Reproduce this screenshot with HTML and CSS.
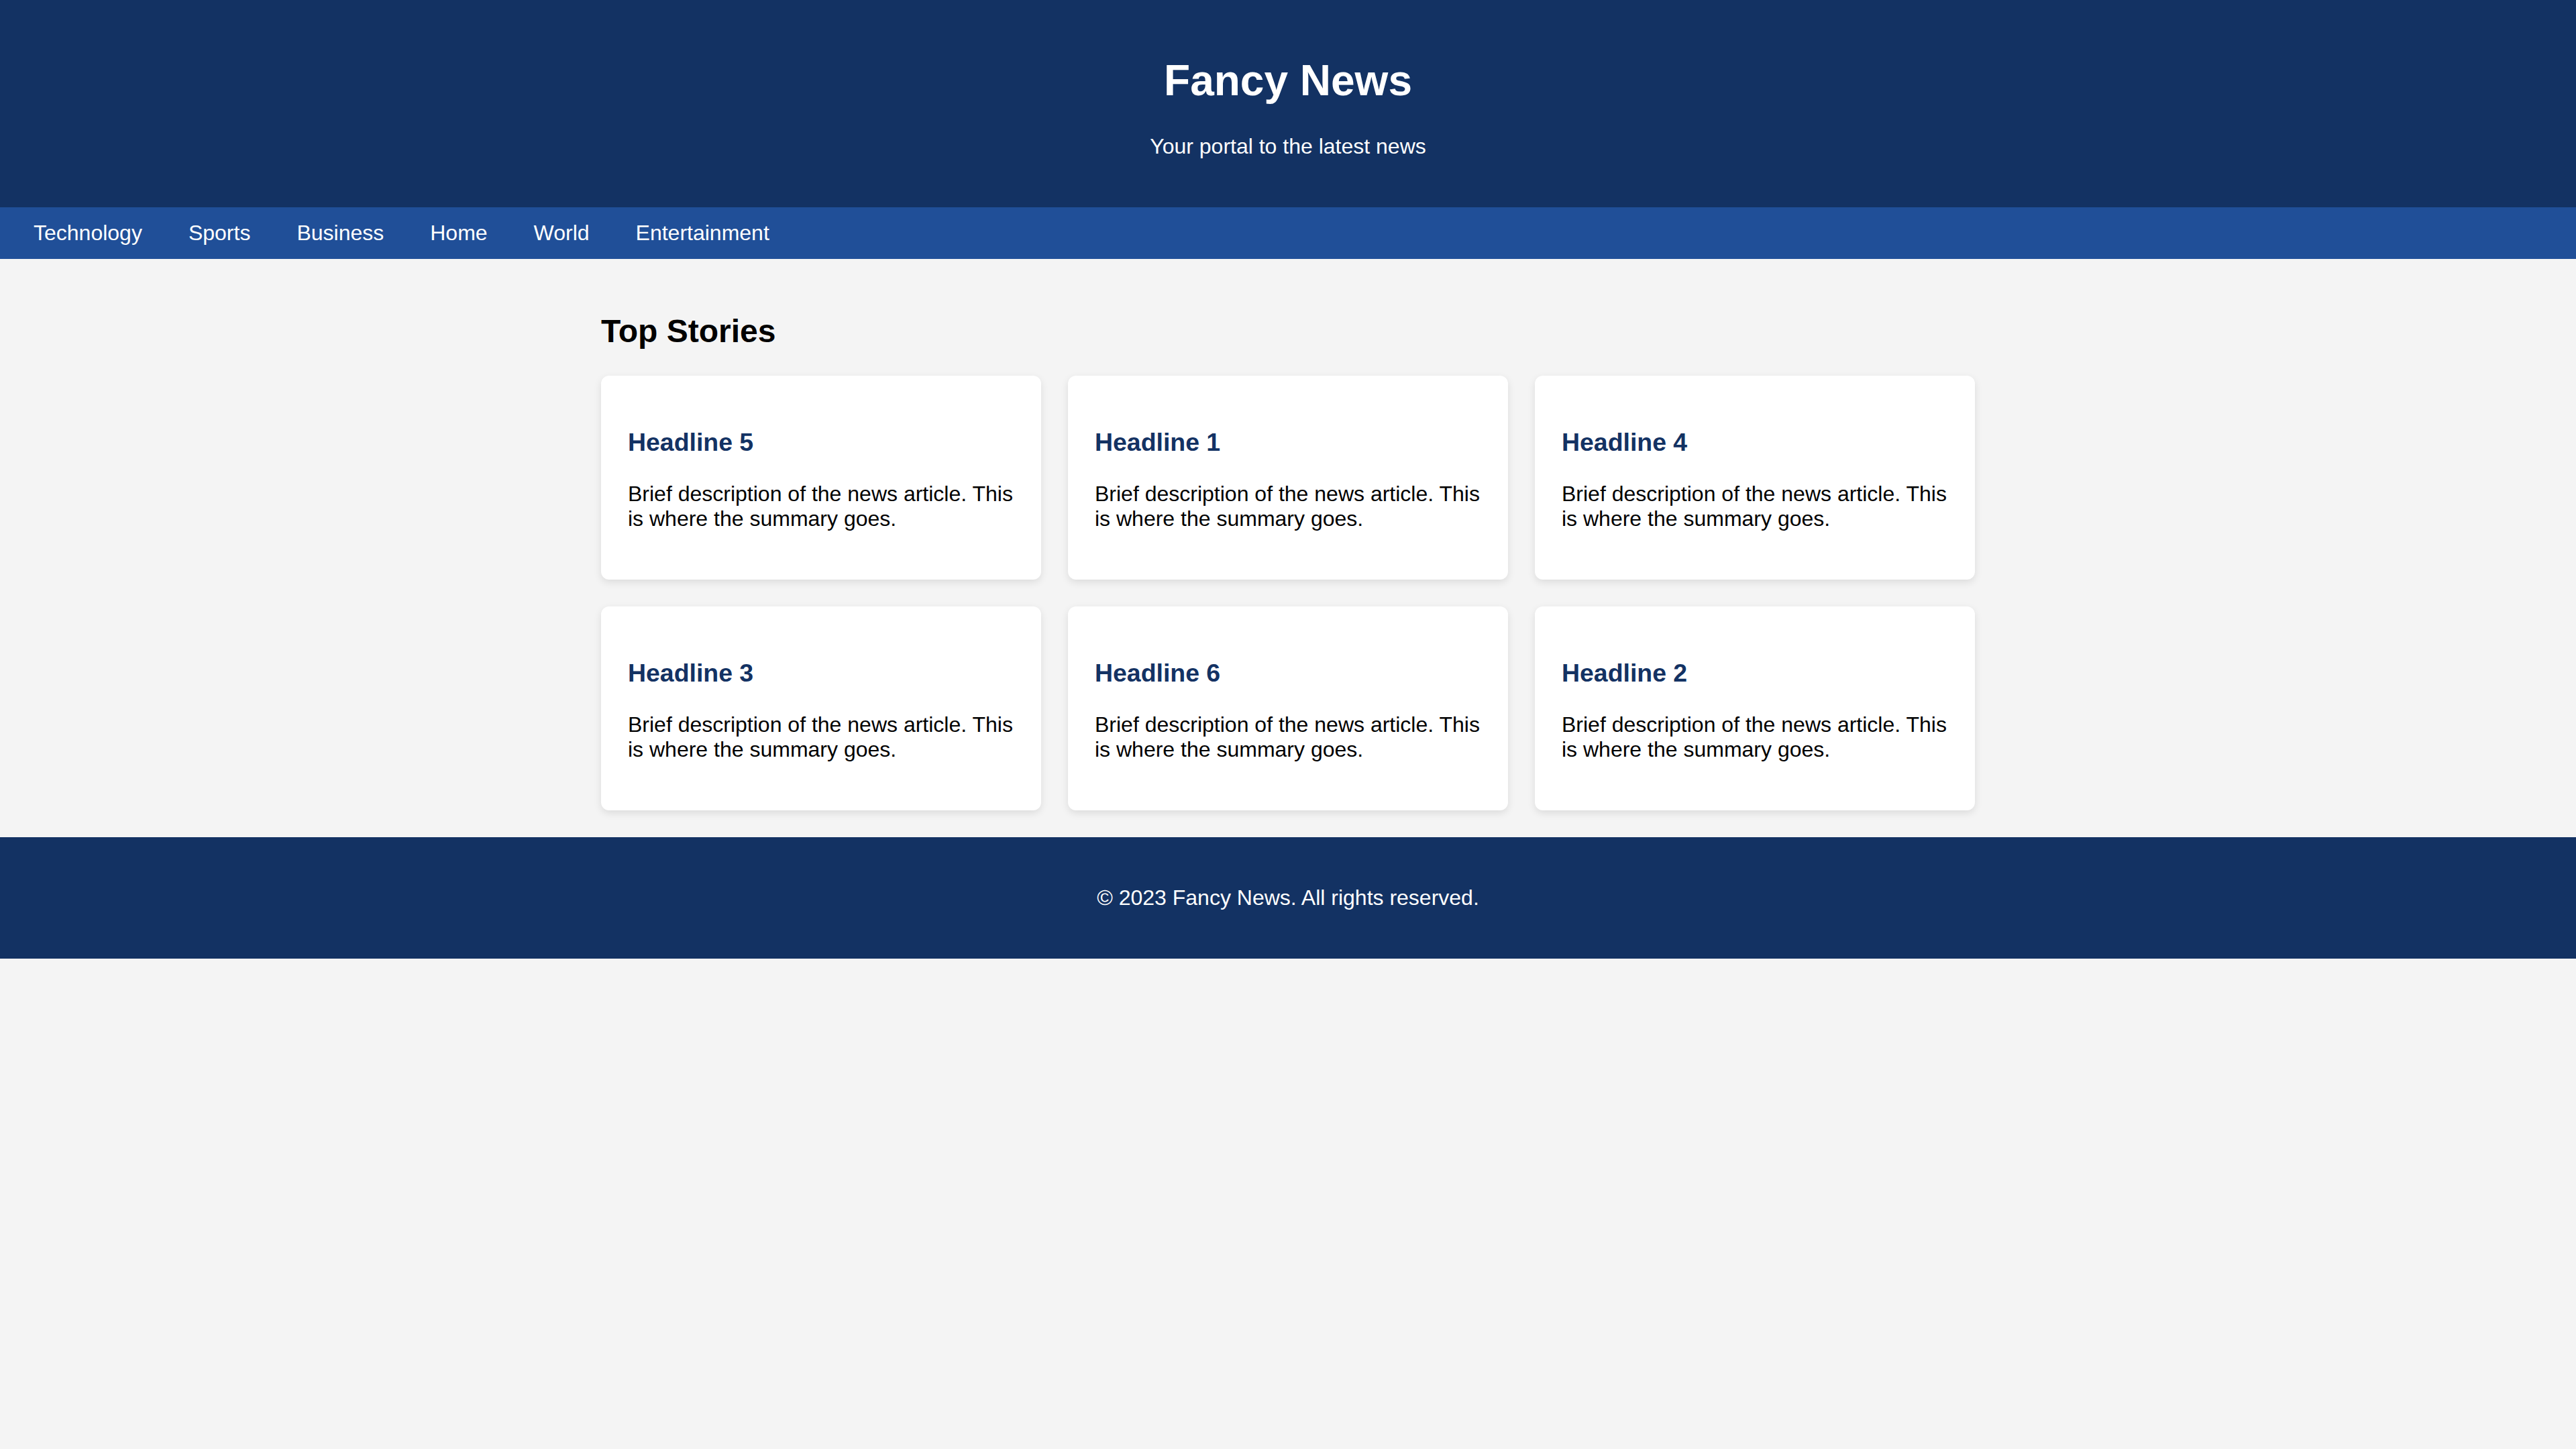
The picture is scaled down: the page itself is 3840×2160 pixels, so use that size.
FILE: index.html
```html
<!DOCTYPE html>
<html lang="en">
<head>
<meta charset="utf-8">
<title>Fancy News</title>
<link rel="stylesheet" href="styles.css">
</head>
<body>
<header class="site-header">
  <h1 class="site-title">Fancy News</h1>
  <p class="site-tagline">Your portal to the latest news</p>
</header>
<nav class="site-nav">
  <a class="nav-link" href="#">Technology</a>
  <a class="nav-link" href="#">Sports</a>
  <a class="nav-link" href="#">Business</a>
  <a class="nav-link" href="#">Home</a>
  <a class="nav-link" href="#">World</a>
  <a class="nav-link" href="#">Entertainment</a>
</nav>
<main class="content">
  <h2 class="section-title">Top Stories</h2>
  <div class="story-grid">
    <article class="story-card">
      <h3 class="story-title">Headline 5</h3>
      <p class="story-text">Brief description of the news article. This is where the summary goes.</p>
    </article>
    <article class="story-card">
      <h3 class="story-title">Headline 1</h3>
      <p class="story-text">Brief description of the news article. This is where the summary goes.</p>
    </article>
    <article class="story-card">
      <h3 class="story-title">Headline 4</h3>
      <p class="story-text">Brief description of the news article. This is where the summary goes.</p>
    </article>
    <article class="story-card">
      <h3 class="story-title">Headline 3</h3>
      <p class="story-text">Brief description of the news article. This is where the summary goes.</p>
    </article>
    <article class="story-card">
      <h3 class="story-title">Headline 6</h3>
      <p class="story-text">Brief description of the news article. This is where the summary goes.</p>
    </article>
    <article class="story-card">
      <h3 class="story-title">Headline 2</h3>
      <p class="story-text">Brief description of the news article. This is where the summary goes.</p>
    </article>
  </div>
</main>
<footer class="site-footer">
  <p class="footer-text">&copy; 2023 Fancy News. All rights reserved.</p>
</footer>
</body>
</html>
```

FILE: styles.css
```css
html, body {
  margin: 0;
  padding: 0;
}

body {
  background: #f4f4f4;
  color: #000;
  font-family: "Liberation Sans", Arial, Helvetica, sans-serif;
  font-size: 32px;
}

.site-header {
  background: #133263;
  color: #fff;
  text-align: center;
  padding: 40px;
}

.site-title {
  font-size: 64px;
  font-weight: bold;
  margin: 42.88px 0;
}

.site-tagline {
  font-size: 32px;
  margin: 32px 0;
}

.site-nav {
  background: #204f98;
  display: flex;
  gap: 9px;
  padding: 20px;
}

.nav-link {
  color: #fff;
  text-decoration: none;
  padding: 0 30px;
  font-size: 32px;
}

.content {
  width: 2048px;
  margin: 0 auto;
  padding: 40px 0;
}

.section-title {
  font-size: 48px;
  font-weight: bold;
  margin: 39.84px 0;
}

.story-grid {
  display: grid;
  grid-template-columns: repeat(3, 1fr);
  gap: 40px;
}

.story-card {
  background: #fff;
  border-radius: 12px;
  padding: 40px;
  box-shadow: 0 4px 12px rgba(0, 0, 0, 0.1);
}

.story-title {
  color: #133263;
  font-size: 37.44px;
  font-weight: bold;
  margin: 37.44px 0;
}

.story-text {
  font-size: 32px;
  margin: 32px 0;
}

.site-footer {
  background: #133263;
  color: #fff;
  text-align: center;
  padding: 40px;
}

.footer-text {
  margin: 32px 0;
  font-size: 32px;
}
```
